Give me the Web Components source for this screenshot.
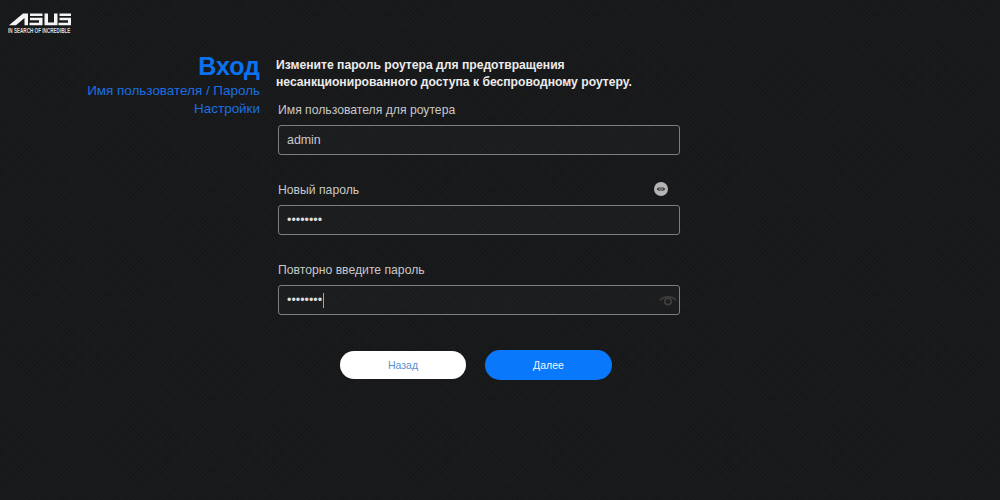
<!DOCTYPE html>
<html lang="ru">
<head>
<meta charset="utf-8">
<title>ASUS</title>
<style>
  html,body{ margin:0; height:100% }
  body{
    width:1000px; height:500px; overflow:hidden;
    color:#ddd;
    font-family:"Liberation Sans", Arial, sans-serif;
    background-color:#1a1b1d;
    background-image:
      repeating-linear-gradient(45deg, rgba(0,0,0,.1) 0 1px, transparent 1px 3px),
      repeating-linear-gradient(-45deg, rgba(0,0,0,.1) 0 1px, transparent 1px 3px);
  }
</style>
</head>
<body>
<asus-page></asus-page>

<script>
class AsusLogo extends HTMLElement{
  connectedCallback(){
    this.attachShadow({mode:'open'});
    this.shadowRoot.innerHTML = `
      <style>
        :host{ display:block; width:64px }
        svg{ display:block }
        .tag{
          margin-top:1px; font:bold 6.4px/7px "Liberation Sans", sans-serif; color:#dcdcdc;
          white-space:nowrap; transform:scaleX(.72); transform-origin:left;
        }
      </style>
      <svg width="64" height="13" viewBox="0 0 64 13" fill="#f4f4f4">
        <path d="M1 12.2 L15 .4 H20 V12.2 H16.5 V5 L8 12.2Z"/>
        <path d="M22 .4 H34.5 V3 H22Z M22 4.8 H34.5 V12.2 H21.5 V9.8 H31 V7.2 H22Z"/>
        <path d="M36.5 .4 H40 V9.6 H46 V.4 H49.5 V12.2 H36.5Z"/>
        <path d="M51.5 .4 H63 V3 H51.5Z M51.5 4.8 H63 V12.2 H50.5 V9.8 H60 V7.2 H51.5Z"/>
      </svg>
      <div class="tag">IN SEARCH OF INCREDIBLE</div>
    `;
  }
}
customElements.define('asus-logo', AsusLogo);

class FormField extends HTMLElement{
  connectedCallback(){
    const label = this.getAttribute('label');
    const value = this.getAttribute('value');
    const secret = this.hasAttribute('secret');
    const caret = this.hasAttribute('caret');
    const eye = this.getAttribute('eye');
    const eyeLine = `<svg width="18" height="13" viewBox="0 0 18 13" fill="none" stroke="#3e3e3e" stroke-width="1.7">
        <path d="M1 6.5C4.5 1.6 13.5 1.6 17 6.5"/><circle cx="9" cy="7.5" r="3.2"/></svg>`;
    const eyeBadge = `<svg width="14" height="14" viewBox="0 0 14 14">
        <circle cx="7" cy="7" r="7" fill="#b4b4b4"/>
        <path d="M2.6 7C4.6 4.2 9.4 4.2 11.4 7C9.4 9.8 4.6 9.8 2.6 7Z" fill="#3c3f42"/>
        <circle cx="7" cy="7" r="1.7" fill="#b4b4b4"/><circle cx="7" cy="7" r=".9" fill="#3c3f42"/></svg>`;
    this.attachShadow({mode:'open'});
    this.shadowRoot.innerHTML = `
      <style>
        :host{ display:block; width:402px }
        .top{ display:flex; justify-content:space-between; align-items:center; height:20px; margin-bottom:6px; padding-right:12px }
        label{ font-size:12.2px; color:#c8c8c8; padding-top:2px }
        .box{
          box-sizing:border-box; height:30px; border:1px solid #7e7e7e; border-radius:3px;
          background:rgba(255,255,255,.02);
          display:flex; align-items:center; justify-content:space-between; padding:0 2px 0 8px;
          font-size:12.4px; color:#c9c9c9;
        }
        .val{ display:flex; align-items:center }
        .dots{ font-size:12.5px; color:#dcdcdc }
        .caret{ width:1px; height:15px; background:#a5a5a5; margin-left:1px }
        svg{ display:block }
      </style>
      <div class="top"><label>${label}</label>${eye === 'badge' ? eyeBadge : ''}</div>
      <div class="box">
        <div class="val"><span class="${secret ? 'dots' : ''}">${value}</span>${caret ? '<i class="caret"></i>' : ''}</div>
        ${eye === 'line' ? eyeLine : ''}
      </div>
    `;
  }
}
customElements.define('form-field', FormField);

class PillButton extends HTMLElement{
  connectedCallback(){
    this.attachShadow({mode:'open'});
    this.shadowRoot.innerHTML = `
      <style>
        :host{ display:block }
        .b{
          width:126px; height:28px; border-radius:15px; display:flex; align-items:center; justify-content:center;
          font-size:10.5px; background:#fff; color:#5a8fd0; box-sizing:border-box;
        }
        :host([primary]) .b{ background:#0a78fa; color:#f2f7ff; height:30px; width:127px }
      </style>
      <div class="b"><slot></slot></div>
    `;
  }
}
customElements.define('pill-button', PillButton);

class AsusPage extends HTMLElement{
  connectedCallback(){
    this.attachShadow({mode:'open'});
    this.shadowRoot.innerHTML = `
      <style>
        :host{ display:block; width:1000px; height:500px; box-sizing:border-box; padding:13px 0 0 8px }
        .main{ display:flex; margin-top:15px; margin-left:-8px }
        .side{ width:260px; text-align:right; padding-top:4px }
        h1{ margin:0 0 2px; font-size:25px; line-height:27px; font-weight:bold; color:#0a72ee }
        .side p{ margin:0; font-size:13.45px; line-height:18px; color:#1a70e0 }
        .content{ margin-left:16px; width:420px }
        .intro{ margin:8px 0 0; font-size:12.15px; line-height:17px; font-weight:bold; color:#ececec }
        form-field{ margin-left:2px }
        .f1{ margin-top:8px }
        .f2{ margin-top:24px }
        .f3{ margin-top:24px }
        .btns{ display:flex; gap:19px; align-items:center; margin:35px 0 0 64px }
      </style>
      <asus-logo></asus-logo>
      <div class="main">
        <div class="side">
          <h1>Вход</h1>
          <p>Имя пользователя / Пароль<br>Настройки</p>
        </div>
        <div class="content">
          <p class="intro">Измените пароль роутера для предотвращения<br>несанкционированного доступа к беспроводному роутеру.</p>
          <form-field class="f1" label="Имя пользователя для роутера" value="admin"></form-field>
          <form-field class="f2" label="Новый пароль" value="••••••••" secret eye="badge"></form-field>
          <form-field class="f3" label="Повторно введите пароль" value="••••••••" secret caret eye="line"></form-field>
          <div class="btns">
            <pill-button>Назад</pill-button>
            <pill-button primary>Далее</pill-button>
          </div>
        </div>
      </div>
    `;
  }
}
customElements.define('asus-page', AsusPage);
</script>
</body>
</html>
